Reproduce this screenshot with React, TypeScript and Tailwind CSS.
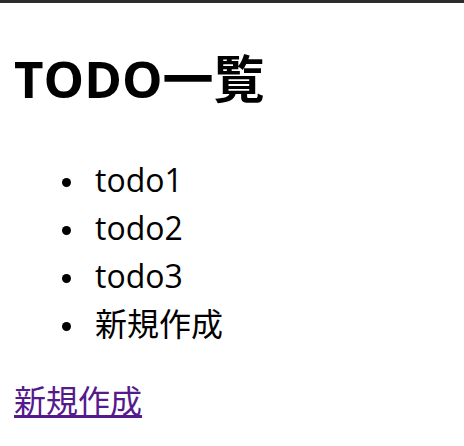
import React from 'react';

const TODOS = ['todo1', 'todo2', 'todo3', '新規作成'];

export default function App() {
  return (
    <div className="min-h-screen bg-white text-black font-['Open_Sans','Noto_Sans_CJK_JP',sans-serif]">
      {/* browser chrome edge */}
      <div className="h-[3px] bg-[#2d2d2d]" />

      <div className="px-[14px]">
        <h1 className="mt-[50px] text-[51px] leading-[51px] font-bold">TODO一覧</h1>

        <ul className="mt-[52px]">
          {TODOS.map(t => (
            <li key={t} className="flex items-start h-[48px] text-[32px] leading-[48px]">
              <span className="ml-[48px] mr-[24px] mt-[22px] w-[9px] h-[9px] rounded-full bg-black flex-shrink-0" />
              <span>{t}</span>
            </li>
          ))}
        </ul>

        <div className="mt-[29px] text-[32px] leading-[48px]">
          <a href="#" className="text-[#551A8B] underline">新規作成</a>
        </div>
      </div>
    </div>
  );
}
